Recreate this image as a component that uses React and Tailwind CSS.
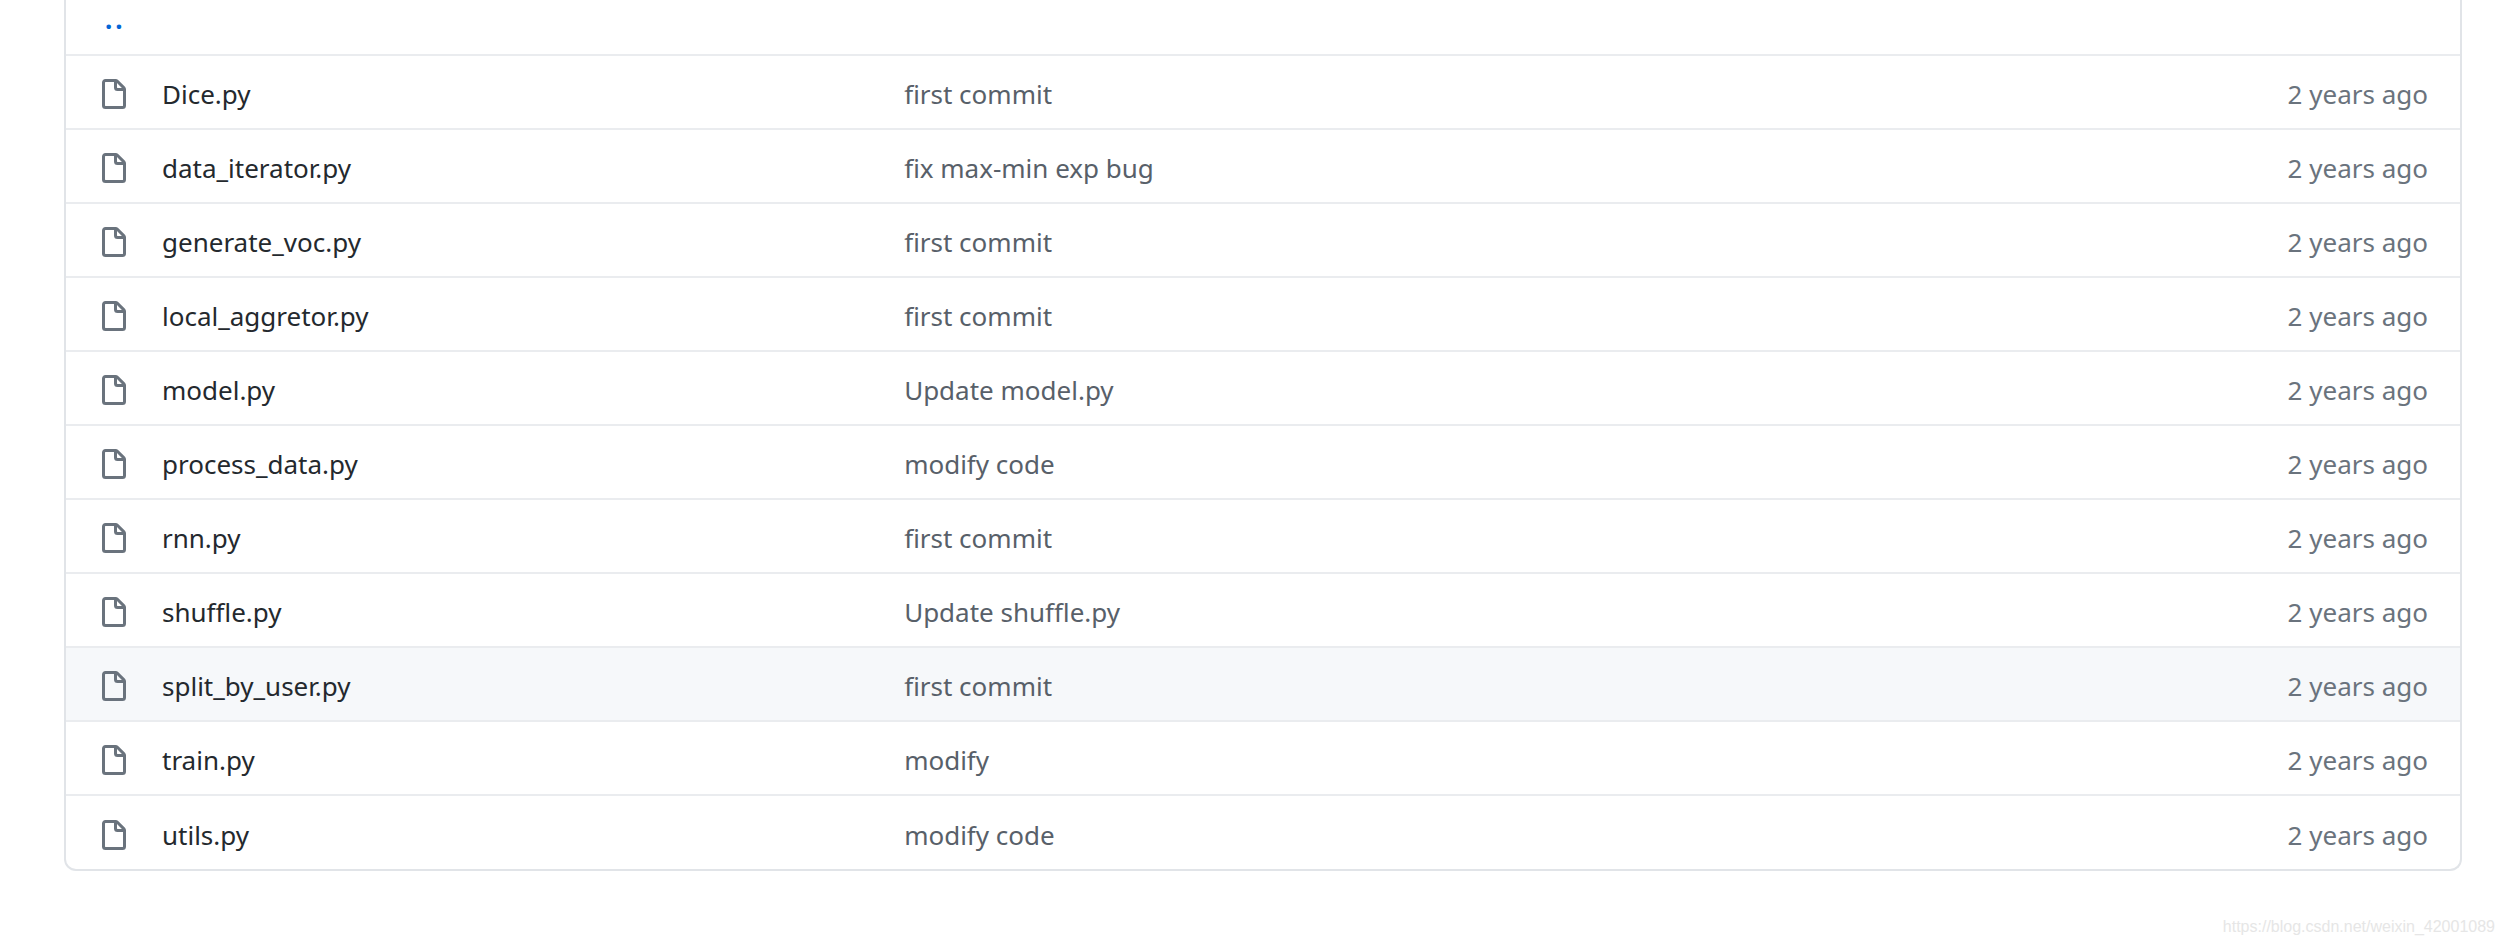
const files = [
  { name: 'Dice.py', message: 'first commit' },
  { name: 'data_iterator.py', message: 'fix max-min exp bug' },
  { name: 'generate_voc.py', message: 'first commit' },
  { name: 'local_aggretor.py', message: 'first commit' },
  { name: 'model.py', message: 'Update model.py' },
  { name: 'process_data.py', message: 'modify code' },
  { name: 'rnn.py', message: 'first commit' },
  { name: 'shuffle.py', message: 'Update shuffle.py' },
  { name: 'split_by_user.py', message: 'first commit', active: true },
  { name: 'train.py', message: 'modify' },
  { name: 'utils.py', message: 'modify code' },
]

function FileIcon() {
  return (
    <svg viewBox="0 0 16 16" className="mt-0.5 block size-8 fill-[#6a737d]" aria-hidden="true">
      <path fillRule="evenodd" d="M3.75 1.5a.25.25 0 00-.25.25v11.5c0 .138.112.25.25.25h8.5a.25.25 0 00.25-.25V6H9.75A1.75 1.75 0 018 4.25V1.5H3.75zm5.75.56v2.19c0 .138.112.25.25.25h2.19L9.5 2.06zM2 1.75C2 .784 2.784 0 3.75 0h5.086c.464 0 .909.184 1.237.513l3.414 3.414c.329.328.513.773.513 1.237v8.086A1.75 1.75 0 0112.25 15h-8.5A1.75 1.75 0 012 13.25V1.75z" />
    </svg>
  )
}

function FileRow({ name, message, active }) {
  return (
    <tr className={`h-[74px] border-t-2 border-[#eaecef] ${active ? 'bg-[#f6f8fa]' : ''}`}>
      <td className="pt-1 pl-8"><FileIcon /></td>
      <td className="pt-1"><a href="#" className="text-[#24292e]">{name}</a></td>
      <td className="pt-1"><a href="#" className="text-[#586069]">{message}</a></td>
      <td className="pt-1 pr-8 text-right text-[#6a737d]">2 years ago</td>
    </tr>
  )
}

export default function App() {
  return (
    <div className="bg-white font-['Noto_Sans','Open_Sans',sans-serif] text-[26px] leading-9">
      <div className="mr-[41px] ml-16 overflow-hidden rounded-b-xl border-2 border-t-0 border-[#e1e4e8]">
        <table className="w-full table-fixed border-collapse">
          <colgroup>
            <col className="w-24" />
            <col className="w-[31%]" />
            <col />
            <col className="w-[300px]" />
          </colgroup>
          <tbody>
            <tr className="h-[55px]">
              <td colSpan={4} className="pb-4 pl-[39px]">
                <a href="#" aria-label="Parent directory" className="inline-flex gap-[3px] font-bold text-[#0366d6]">
                  <span>.</span>
                  <span>.</span>
                </a>
              </td>
            </tr>
            {files.map(f => <FileRow key={f.name} {...f} />)}
          </tbody>
        </table>
      </div>
      <p className="mt-11 pr-2 text-right font-['Liberation_Sans',Arial,sans-serif] text-base text-[#e6e6e6]">
        https://blog.csdn.net/weixin_42001089
      </p>
    </div>
  )
}
